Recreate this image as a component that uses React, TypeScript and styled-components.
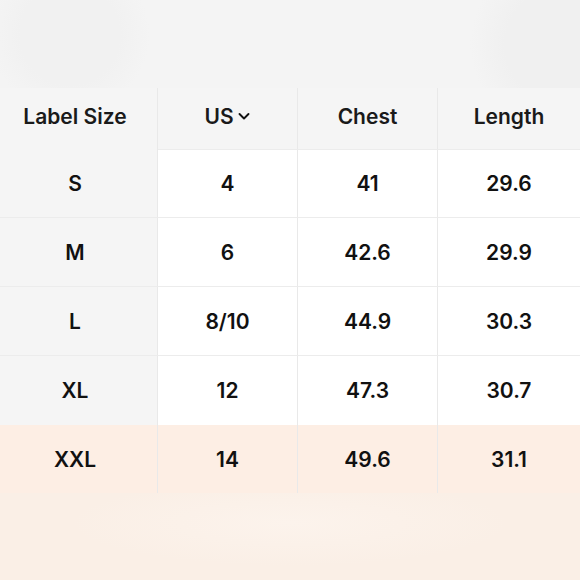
import React from "react";
import styled, { createGlobalStyle } from "styled-components";

const Global = createGlobalStyle`
  html, body { margin: 0; padding: 0; background: #f4f4f4; }
  body { font-family: Inter, "Noto Sans", "Liberation Sans", sans-serif; -webkit-font-smoothing: antialiased; }
`;

const Page = styled.div`
  width: 580px;
  height: 580px;
  display: flex;
  flex-direction: column;
  overflow: hidden;
`;

const Top = styled.div`
  height: 88px;
  flex: none;
  background:
    radial-gradient(circle at 70px 35px, #f1f1f1 0, #f1f1f1 50px, rgba(244,244,244,0) 80px),
    radial-gradient(circle at 560px 45px, #f0f0f0 0, #f0f0f0 55px, rgba(244,244,244,0) 90px),
    #f4f4f4;
`;

const Table = styled.div`
  display: grid;
  grid-template-columns: 158px 140px 140px 1fr;
  flex: none;
`;

type CellProps = { $bg: string; $h: number; $right?: boolean; $bottom?: boolean; $first?: boolean; $head?: boolean };

const Cell = styled.div<CellProps>`
  height: ${(p) => p.$h}px;
  box-sizing: border-box;
  display: flex;
  align-items: center;
  justify-content: center;
  padding-right: ${(p) => (p.$first ? "7px" : "0")};
  padding-bottom: ${(p) => (p.$head ? "5px" : "0")};
  background: ${(p) => p.$bg};
  border-right: ${(p) => (p.$right ? "1px solid #e9e9e9" : "none")};
  border-bottom: ${(p) => (p.$bottom ? "1px solid #ececec" : "none")};
  font-size: 21px;
  font-weight: 600;
  color: ${(p) => (p.$head ? "#1a1a1a" : "#111")};
`;

const HeadText = styled.span`
  display: inline-flex;
  align-items: center;
  gap: 3px;
`;

const Bottom = styled.div`
  flex: 1;
  background:
    radial-gradient(ellipse at 290px 30px, #fcf3ec 0, rgba(251,239,230,0) 220px),
    #faefe6;
`;

const Chevron = () => (
  <svg width="14" height="14" viewBox="0 0 14 14" fill="none">
    <path d="M2.5 5 L7 9.5 L11.5 5" stroke="#111" strokeWidth="1.9" strokeLinecap="round" strokeLinejoin="round" />
  </svg>
);

const rows = [
  ["S", "4", "41", "29.6"],
  ["M", "6", "42.6", "29.9"],
  ["L", "8/10", "44.9", "30.3"],
  ["XL", "12", "47.3", "30.7"],
  ["XXL", "14", "49.6", "31.1"],
];

const heads = ["Label Size", "US", "Chest", "Length"];

export default function App() {
  return (
    <>
      <Global />
      <Page>
        <Top />
        <Table>
          {heads.map((h, j) => (
            <Cell key={h} $head $first={j === 0} $bg="#f5f5f5" $h={62} $right={j < 3} $bottom={j > 0}>
              <HeadText>
                {h}
                {h === "US" && <Chevron />}
              </HeadText>
            </Cell>
          ))}
          {rows.map((r, i) => {
            const last = i === rows.length - 1;
            return r.map((v, j) => (
              <Cell
                key={`${i}-${j}`}
                $first={j === 0}
                $h={i === 0 || last ? 68 : 69}
                $bg={last ? "#fdeee4" : j === 0 ? "#f5f5f5" : "#ffffff"}
                $right={j < 3}
                $bottom={!last && i !== rows.length - 2}
              >
                {v}
              </Cell>
            ));
          })}
        </Table>
        <Bottom />
      </Page>
    </>
  );
}
